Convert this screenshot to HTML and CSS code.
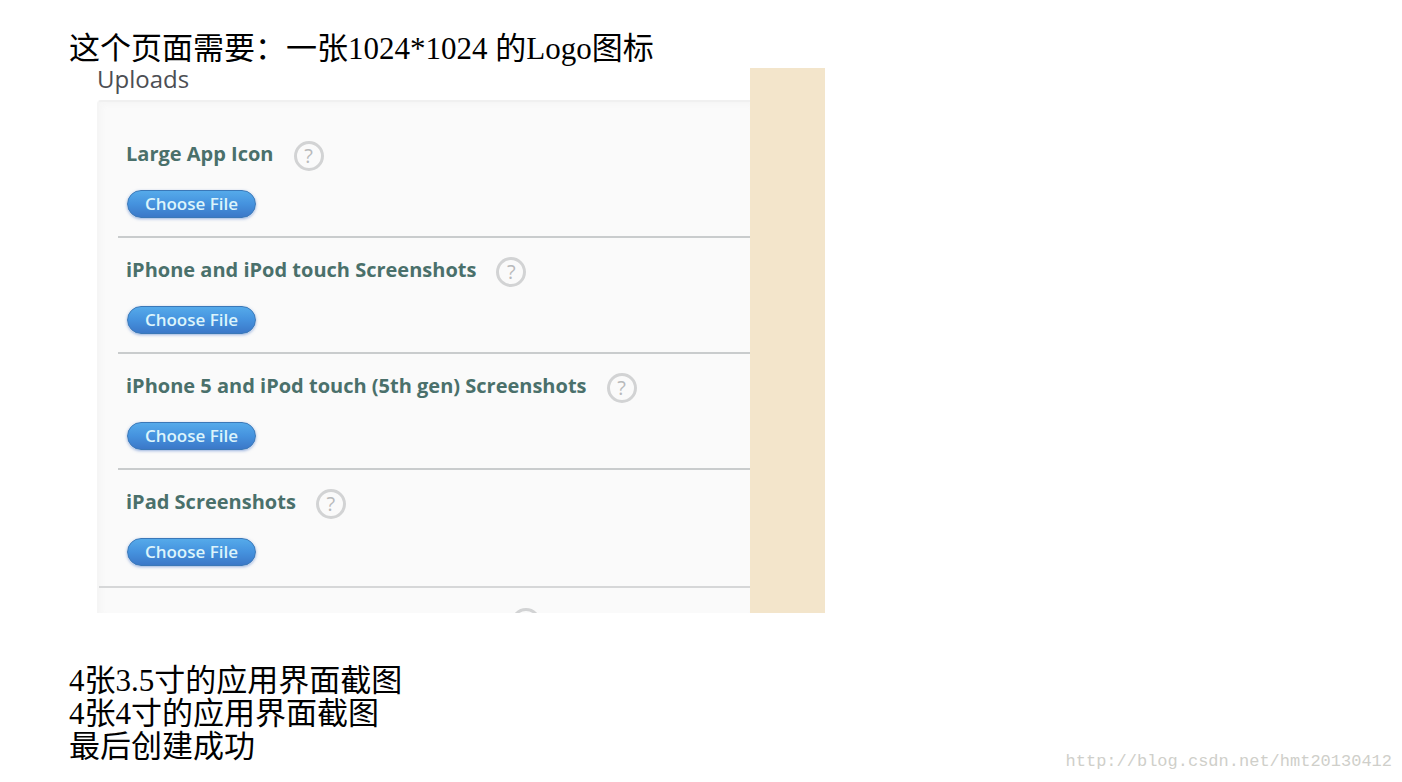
FILE: index.html
```html
<!DOCTYPE html>
<html lang="zh-CN">
<head>
  <meta charset="UTF-8" />
  <meta name="viewport" content="width=device-width, initial-scale=1" />
  <title>Uploads</title>
  <link rel="stylesheet" href="styles.css">
</head>
<body>

  <main class="article">
    <p>这个页面需要：一张1024*1024 的Logo图标</p>

    <section class="shot">
      <div class="uploads">
        <h2>Uploads</h2>
        <div class="panel">
          <div class="row">
            <div class="row-head">
              <h3 id="large-icon">Large App Icon</h3>
              <button type="button" class="help" aria-label="Help">?</button>
            </div>
            <button type="button" class="choose" aria-describedby="large-icon">Choose File</button>
          </div>
          <div class="row">
            <div class="row-head">
              <h3 id="iphone">iPhone and iPod touch Screenshots</h3>
              <button type="button" class="help" aria-label="Help">?</button>
            </div>
            <button type="button" class="choose" aria-describedby="iphone">Choose File</button>
          </div>
          <div class="row">
            <div class="row-head">
              <h3 id="iphone5">iPhone 5 and iPod touch (5th gen) Screenshots</h3>
              <button type="button" class="help" aria-label="Help">?</button>
            </div>
            <button type="button" class="choose" aria-describedby="iphone5">Choose File</button>
          </div>
          <div class="row">
            <div class="row-head">
              <h3 id="ipad">iPad Screenshots</h3>
              <button type="button" class="help" aria-label="Help">?</button>
            </div>
            <button type="button" class="choose" aria-describedby="ipad">Choose File</button>
          </div>
          <div class="row-cut">
            <button type="button" class="help" aria-label="Help"></button>
          </div>
        </div>
      </div>
      <div class="stripe"></div>
    </section>

    <p>4张3.5寸的应用界面截图</p>
    <p>4张4寸的应用界面截图</p>
    <p>最后创建成功</p>
  </main>

  <a class="watermark" href="http://blog.csdn.net/hmt20130412">http://blog.csdn.net/hmt20130412</a>

</body>
</html>
```

FILE: styles.css
```css
* {
  box-sizing: border-box;
}

body {
  margin: 0;
  min-height: 100vh;
  position: relative;
  background: #fff;
  color: #000;
  font-family: "Liberation Serif", "Noto Sans CJK SC", serif;
}

.article {
  padding: 32px 69px 16px;
}

.article p {
  margin: 0;
  font-size: 31px;
  line-height: 33px;
}

.shot {
  display: flex;
  max-width: 728px;
  margin: 3px 0 51px 28px;
  font-family: "Open Sans", "Noto Sans", sans-serif;
}

.uploads {
  flex: 1;
  min-width: 0;
}

.stripe {
  width: 75px;
  background: #f3e5cb;
}

h2 {
  margin: 0;
  font-size: 24px;
  line-height: 22px;
  padding-bottom: 10px;
  font-weight: 400;
  color: #4c4e53;
}

.panel {
  padding-top: 20px;
  background: #fafafa;
  border-top: 2px solid #f0f0f0;
  border-left: 2px solid #f5f5f5;
  border-top-left-radius: 4px;
  box-shadow: inset 3px 3px 5px #f6f6f6;
}

.row {
  margin-left: 19px;
  padding: 19px 8px 18px;
  border-bottom: 2px solid #c9cccd;
}

/* last full row closes with a line across the whole panel */
.row:nth-child(4) {
  margin-left: 0;
  padding: 19px 27px 20px;
  border-bottom: 2px solid #d6d7d8;
}

.row-head {
  display: flex;
  align-items: center;
  gap: 20px;
  margin-bottom: 19px;
}

h3 {
  margin: 0;
  font-size: 20px;
  line-height: 26px;
  padding-bottom: 4px;
  font-weight: 700;
  color: #4a706b;
}

.help {
  flex: none;
  width: 30px;
  height: 30px;
  padding: 0;
  border: 3px solid #d2d3d4;
  border-radius: 50%;
  background: none;
  font-family: inherit;
  font-size: 20px;
  line-height: 24px;
  font-weight: 500;
  color: #b8b9ba;
  cursor: pointer;
}

.choose {
  display: block;
  width: 129px;
  height: 28px;
  padding: 0;
  margin-left: 1px;
  border: 1px solid #3a78b8;
  border-radius: 14px;
  background: linear-gradient(#55aaea, #4592de 50%, #3b78c8);
  box-shadow: 0 1px 3px rgba(60, 110, 200, 0.5);
  font-family: inherit;
  font-size: 17px;
  line-height: 26px;
  font-weight: 600;
  color: #dcf4fb;
  cursor: pointer;
}

.row-cut {
  display: flex;
  justify-content: flex-end;
  height: 25px;
  padding: 20px 209px 0 0;
  overflow: hidden;
}

.watermark {
  position: absolute;
  right: 10px;
  bottom: 10px;
  font-family: "Liberation Mono", monospace;
  font-size: 17px;
  line-height: 20px;
  color: #cfcfca;
  text-decoration: none;
}
```
